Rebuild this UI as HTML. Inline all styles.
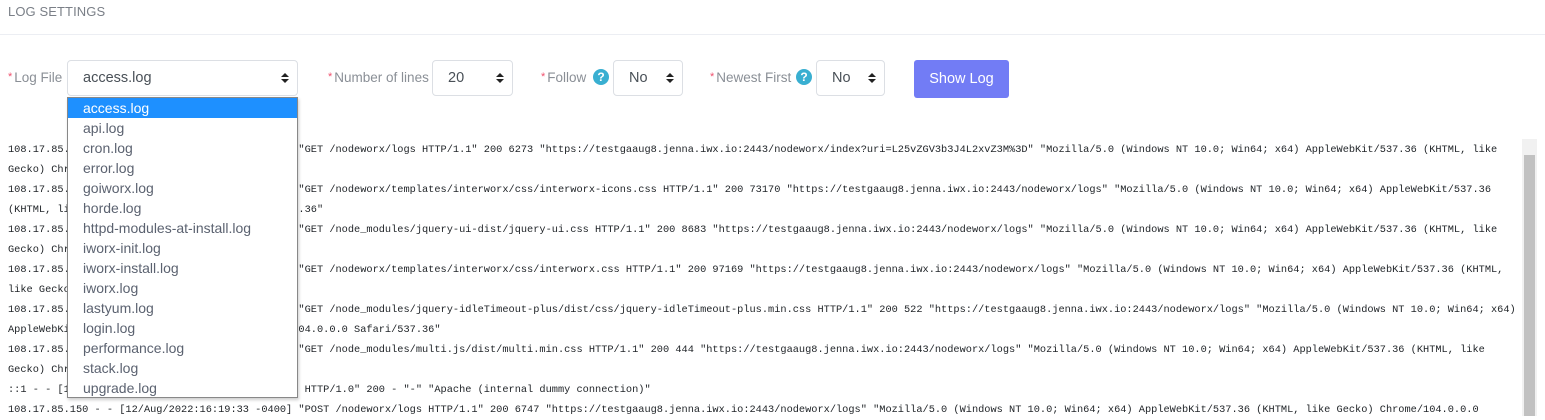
<!DOCTYPE html>
<html><head><style>
body{margin:0;width:1545px;height:416px;overflow:hidden;background:#fff;font-family:"Liberation Sans",sans-serif;position:relative}
.abs{position:absolute}
.hdr{left:8px;top:4px;font-size:13px;color:#7a7f87;letter-spacing:0.1px}
.rule{left:0;top:34px;width:1545px;height:1px;background:#eceef3}
.lbl{font-size:13.5px;color:#8a8f96;top:70px}
.lbl b{color:#f0506e;font-weight:normal;font-size:11px;vertical-align:2px;margin-right:2px}
.sel{border:1px solid #dcdfe4;border-radius:4px;height:36px;top:60px;box-sizing:border-box;font-size:14.5px;color:#495057;line-height:34px;padding-left:15px}
.arr{position:absolute;right:12px;top:12px;width:0;height:0}
.arr:before{content:"";position:absolute;left:-4px;top:0;border-left:4px solid transparent;border-right:4px solid transparent;border-bottom:4px solid #222}
.arr:after{content:"";position:absolute;left:-4px;top:6px;border-left:4px solid transparent;border-right:4px solid transparent;border-top:4px solid #222}
.q{width:16px;height:16px;border-radius:50%;background:#39afd1;color:#fff;font-size:12px;font-weight:bold;text-align:center;line-height:16px;top:69px}
.btn{left:914px;top:60px;width:95px;height:38px;border-radius:3px;background:#727cf5;color:#fff;font-size:14.5px;text-align:center;line-height:38px}
.log{left:8px;top:140px;font-family:"Liberation Mono",monospace;font-size:10.3px;color:#212529;white-space:pre;line-height:20px}
.dd{left:67px;top:97px;width:231px;height:301px;background:#fff;border:1px solid #888;box-sizing:border-box;box-shadow:1px 2px 3px rgba(0,0,0,.2);font-size:14px;color:#5b6270}
.dd div{height:20px;line-height:20px;padding-left:15px}
.dd .on{background:#1e90ff;color:#fff}
.sb{left:1522px;top:139px;width:15px;height:277px;background:#f1f1f1}
.th{left:1524px;top:155px;width:11px;height:261px;background:#c1c1c1}
</style></head><body>
<div class="abs hdr">LOG SETTINGS</div>
<div class="abs rule"></div>
<div class="abs lbl" style="left:8px"><b>*</b>Log File</div>
<div class="abs sel" style="left:67px;width:231px">access.log<span class="arr"></span></div>
<div class="abs lbl" style="left:328px"><b>*</b>Number of lines</div>
<div class="abs sel" style="left:432px;width:81px">20<span class="arr"></span></div>
<div class="abs lbl" style="left:541px"><b>*</b>Follow</div>
<div class="abs q" style="left:593px">?</div>
<div class="abs sel" style="left:613px;width:70px">No<span class="arr"></span></div>
<div class="abs lbl" style="left:710px"><b>*</b>Newest First</div>
<div class="abs q" style="left:796px">?</div>
<div class="abs sel" style="left:816px;width:69px">No<span class="arr"></span></div>
<div class="abs btn">Show Log</div>
<div class="abs log">108.17.85.150 - - [12/Aug/2022:16:19:33 -0400] "GET /nodeworx/logs HTTP/1.1" 200 6273 "https://testgaaug8.jenna.iwx.io:2443/nodeworx/index?uri=L25vZGV3b3J4L2xvZ3M%3D" "Mozilla/5.0 (Windows NT 10.0; Win64; x64) AppleWebKit/537.36 (KHTML, like
Gecko) Chrome/104.0.0.0 Safari/537.36"
108.17.85.150 - - [12/Aug/2022:16:19:33 -0400] "GET /nodeworx/templates/interworx/css/interworx-icons.css HTTP/1.1" 200 73170 "https://testgaaug8.jenna.iwx.io:2443/nodeworx/logs" "Mozilla/5.0 (Windows NT 10.0; Win64; x64) AppleWebKit/537.36
(KHTML, like Gecko) Chrome/104.0.0.0 Safari/537.36"
108.17.85.150 - - [12/Aug/2022:16:19:33 -0400] "GET /node_modules/jquery-ui-dist/jquery-ui.css HTTP/1.1" 200 8683 "https://testgaaug8.jenna.iwx.io:2443/nodeworx/logs" "Mozilla/5.0 (Windows NT 10.0; Win64; x64) AppleWebKit/537.36 (KHTML, like
Gecko) Chrome/104.0.0.0 Safari/537.36"
108.17.85.150 - - [12/Aug/2022:16:19:33 -0400] "GET /nodeworx/templates/interworx/css/interworx.css HTTP/1.1" 200 97169 "https://testgaaug8.jenna.iwx.io:2443/nodeworx/logs" "Mozilla/5.0 (Windows NT 10.0; Win64; x64) AppleWebKit/537.36 (KHTML,
like Gecko) Chrome/104.0.0.0 Safari/537.36"
108.17.85.150 - - [12/Aug/2022:16:19:33 -0400] "GET /node_modules/jquery-idleTimeout-plus/dist/css/jquery-idleTimeout-plus.min.css HTTP/1.1" 200 522 "https://testgaaug8.jenna.iwx.io:2443/nodeworx/logs" "Mozilla/5.0 (Windows NT 10.0; Win64; x64)
AppleWebKit/537.36 (KHTML, like Gecko) Chrome/104.0.0.0 Safari/537.36"
108.17.85.150 - - [12/Aug/2022:16:19:33 -0400] "GET /node_modules/multi.js/dist/multi.min.css HTTP/1.1" 200 444 "https://testgaaug8.jenna.iwx.io:2443/nodeworx/logs" "Mozilla/5.0 (Windows NT 10.0; Win64; x64) AppleWebKit/537.36 (KHTML, like
Gecko) Chrome/104.0.0.0 Safari/537.36"
::1 - - [12/Aug/2022:16:19:33 -0400] "OPTIONS * HTTP/1.0" 200 - "-" "Apache (internal dummy connection)"
108.17.85.150 - - [12/Aug/2022:16:19:33 -0400] "POST /nodeworx/logs HTTP/1.1" 200 6747 "https://testgaaug8.jenna.iwx.io:2443/nodeworx/logs" "Mozilla/5.0 (Windows NT 10.0; Win64; x64) AppleWebKit/537.36 (KHTML, like Gecko) Chrome/104.0.0.0</div>
<div class="abs sb"></div>
<div class="abs th"></div>
<div class="abs dd">
<div class="on">access.log</div><div>api.log</div><div>cron.log</div><div>error.log</div><div>goiworx.log</div><div>horde.log</div><div>httpd-modules-at-install.log</div><div>iworx-init.log</div><div>iworx-install.log</div><div>iworx.log</div><div>lastyum.log</div><div>login.log</div><div>performance.log</div><div>stack.log</div><div>upgrade.log</div>
</div>
</body></html>
